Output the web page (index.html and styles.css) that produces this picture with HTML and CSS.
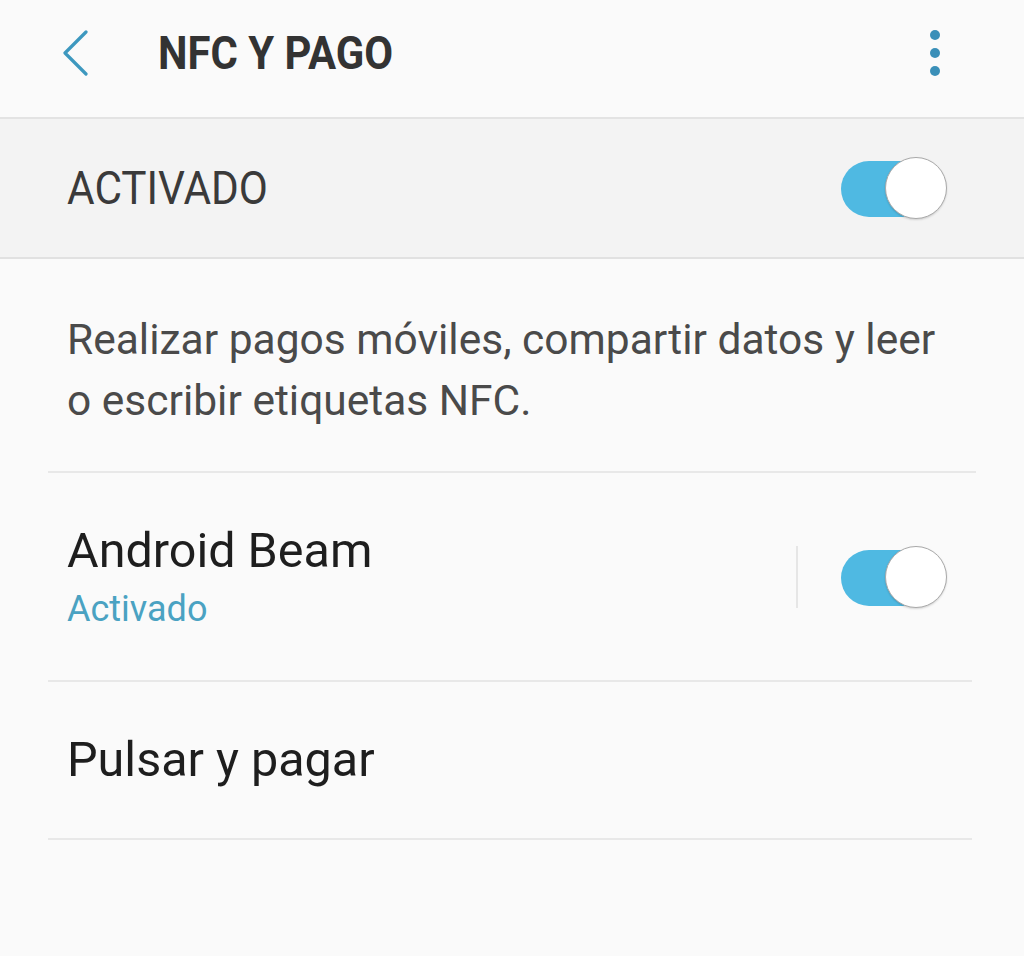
FILE: index.html
```html
<!DOCTYPE html>
<html lang="es">
<head>
<meta charset="utf-8">
<title>NFC y pago</title>
<link rel="stylesheet" href="styles.css">
</head>
<body>
<div class="screen">
  <header class="appbar">
    <svg class="back" width="30" height="46" viewBox="0 0 30 46"><path d="M26 2 L5 23 L26 44" fill="none" stroke="#3d98bf" stroke-width="3.2" stroke-linecap="round" stroke-linejoin="round"/></svg>
    <h1 class="title">NFC Y PAGO</h1>
    <svg class="more" width="14" height="48" viewBox="0 0 14 48"><circle cx="7" cy="6" r="5" fill="#3a8fb8"/><circle cx="7" cy="24" r="5" fill="#3a8fb8"/><circle cx="7" cy="42" r="5" fill="#3a8fb8"/></svg>
  </header>
  <section class="master">
    <span class="master-label">ACTIVADO</span>
    <span class="switch"><span class="thumb"></span></span>
  </section>
  <p class="desc">Realizar pagos móviles, compartir datos y leer o escribir etiquetas NFC.</p>
  <div class="row beam">
    <div class="row-text">
      <div class="row-title">Android Beam</div>
      <div class="row-sub">Activado</div>
    </div>
    <span class="vsep"></span>
    <span class="switch"><span class="thumb"></span></span>
  </div>
  <div class="row pay">
    <div class="row-title">Pulsar y pagar</div>
  </div>
</div>
</body>
</html>
```
FILE: styles.css
```css
html, body {
  margin: 0;
  padding: 0;
  background: #fafafa;
}
body {
  font-family: Roboto, "Noto Sans", sans-serif;
  width: 1024px;
  height: 956px;
  overflow: hidden;
}
.appbar {
  display: flex;
  align-items: center;
  border-bottom: 2px solid #e3e3e3;
  box-sizing: border-box;
  height: 119px;
  padding-bottom: 12px;
}
.back {
  margin-left: 60px;
  flex: none;
}
.title {
  margin: 0 0 0 68px;
  font-size: 47px;
  font-weight: 700;
  color: #333;
  transform: scaleX(0.89);
  transform-origin: left center;
  letter-spacing: 0;
  flex: 1;
}
.more {
  margin-right: 82px;
  flex: none;
}
.master {
  background: #f3f3f3;
  height: 140px;
  box-sizing: border-box;
  border-bottom: 2px solid #e1e1e1;
  display: flex;
  align-items: center;
  justify-content: space-between;
  padding: 0 77px 0 67px;
}
.master-label {
  font-size: 46px;
  color: #3a3a3a;
  transform: scaleX(0.92);
  transform-origin: left center;
}
.switch {
  position: relative;
  width: 106px;
  height: 62px;
  flex: none;
}
.switch::before {
  content: "";
  position: absolute;
  left: 0;
  top: 4px;
  width: 90px;
  height: 56px;
  border-radius: 28px;
  background: #4fb9e2;
}
.thumb {
  position: absolute;
  right: 0;
  top: 0;
  width: 60px;
  height: 60px;
  border-radius: 50%;
  background: #fff;
  border: 1.5px solid #a9a9a9;
  box-shadow: 0 1px 2px rgba(0,0,0,0.15);
}
.desc {
  margin: 0 48px;
  padding: 50px 36px 40px 19px;
  font-size: 42.5px;
  line-height: 61px;
  color: #4a4a4a;
  border-bottom: 2px solid #e8e8e8;
}
.row {
  margin: 0 52px 0 48px;
  padding-left: 19px;
  border-bottom: 2px solid #e8e8e8;
  display: flex;
  align-items: center;
}
.beam {
  height: 209px;
  box-sizing: border-box;
  padding-right: 25px;
}
.row-text {
  flex: 1;
}
.row-title {
  font-size: 48.5px;
  color: #1e1e1e;
  line-height: 56px;
}
.row-sub {
  font-size: 36px;
  color: #4aa2c2;
  line-height: 44px;
  margin-top: 8px;
}
.vsep {
  width: 2px;
  height: 62px;
  background: #e6e6e6;
  margin-right: 43px;
  flex: none;
}
.pay {
  height: 158px;
  box-sizing: border-box;
}
```
